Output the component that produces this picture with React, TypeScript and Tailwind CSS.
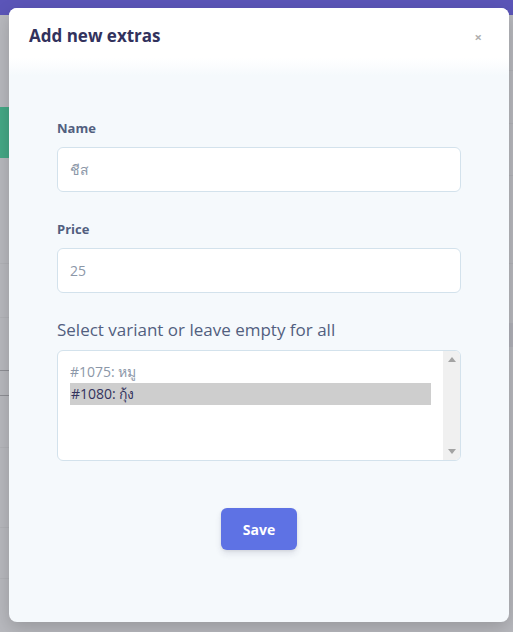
import React from 'react';

const font = { fontFamily: '"Open Sans", "Noto Sans", sans-serif' };

const Field = ({ label, value }: { label: string; value: string }) => (
  <div className="flex flex-col">
    <label className="text-[13px] font-bold leading-5 text-[#525f7f]">{label}</label>
    <div className="mt-[9px] flex h-[45px] items-center rounded-md border border-[#d3e2ec] bg-white px-3">
      <span className="text-[14px] text-[#8c97a8]">{value}</span>
    </div>
  </div>
);

const VariantList = () => (
  <div className="mt-[8px] flex h-[111px] overflow-hidden rounded-md border border-[#d3e2ec] bg-white">
    <div className="flex flex-1 flex-col pt-[10px] pl-3 pr-3">
      <div className="h-[22px] text-[14px] leading-[22px] text-[#8c97a8]">#1075: หมู</div>
      <div className="h-[22px] bg-[#cecece] pl-[1px] text-[14px] leading-[22px] text-[#32325d]">#1080: กุ้ง</div>
    </div>
    <div className="flex w-[17px] flex-col items-center justify-between bg-[#f0f0f0] py-[6px]">
      <svg width="8" height="5" viewBox="0 0 8 5">
        <path d="M4 0L8 5H0z" fill="#a3a3a3" />
      </svg>
      <svg width="8" height="5" viewBox="0 0 8 5">
        <path d="M0 0H8L4 5z" fill="#a3a3a3" />
      </svg>
    </div>
  </div>
);

export default function App() {
  return (
    <div className="relative h-[632px] w-[513px] overflow-hidden bg-[#b8b9be]" style={font}>
      {/* page behind the overlay */}
      <div className="flex h-full flex-col">
        <div className="h-[15px] bg-[#5b55b8]" />
        <div className="flex flex-1 justify-between">
          <div className="flex w-[9px] flex-col">
            <div className="h-[92px]" />
            <div className="h-[51px] bg-[#45a886]" />
            <div className="h-[105px]" />
            <div className="h-px bg-[#b1b2b7]" />
            <div className="h-[53px]" />
            <div className="h-px bg-[#b1b2b7]" />
            <div className="h-[52px]" />
            <div className="h-px bg-[#8e8f95]" />
            <div className="h-[24px]" />
            <div className="h-px bg-[#8e8f95]" />
            <div className="h-[51px]" />
            <div className="h-px bg-[#b1b2b7]" />
            <div className="h-[79px]" />
            <div className="h-px bg-[#b1b2b7]" />
            <div className="h-[50px]" />
            <div className="h-px bg-[#b1b2b7]" />
          </div>
          <div className="flex w-[4px] flex-col">
            <div className="h-[55px]" />
            <div className="h-px bg-[#b1b2b7]" />
            <div className="h-[52px]" />
            <div className="h-px bg-[#b1b2b7]" />
            <div className="h-[51px]" />
            <div className="h-px bg-[#b1b2b7]" />
            <div className="h-[87px]" />
            <div className="h-px bg-[#b1b2b7]" />
            <div className="h-[59px]" />
            <div className="h-[24px] bg-[#b0b1b8]" />
          </div>
        </div>
      </div>

      {/* modal */}
      <div className="absolute left-[9px] top-[8px] flex h-[614px] w-[500px] flex-col overflow-hidden rounded-lg bg-[#f5f9fc] shadow-[0_6px_18px_rgba(0,0,0,0.18)]">
        <div className="flex h-[50px] items-start justify-between bg-white px-5 pt-[16px]">
          <h5 className="text-[17px] font-bold leading-6 text-[#32325d]">Add new extras</h5>
          <span className="mr-[7px] mt-[1px] text-[13px] font-bold leading-6 text-[#b0b0b0]">×</span>
        </div>
        <div className="h-[18px] bg-gradient-to-b from-white to-[#f5f9fc]" />

        <div className="flex flex-col px-12 pt-[42px]">
          <Field label="Name" value="ชีส" />
          <div className="h-[27px]" />
          <Field label="Price" value="25" />
          <label className="mt-[25px] text-[17px] leading-6 text-[#525f7f]">
            Select variant or leave empty for all
          </label>
          <VariantList />

          <div className="mt-[47px] flex justify-center">
            <button className="h-[42px] w-[76px] rounded-md bg-[#5e72e4] text-[14px] font-bold text-white shadow-[0_4px_6px_rgba(50,50,93,0.11),0_1px_3px_rgba(0,0,0,0.08)]">
              Save
            </button>
          </div>
        </div>
      </div>
    </div>
  );
}
